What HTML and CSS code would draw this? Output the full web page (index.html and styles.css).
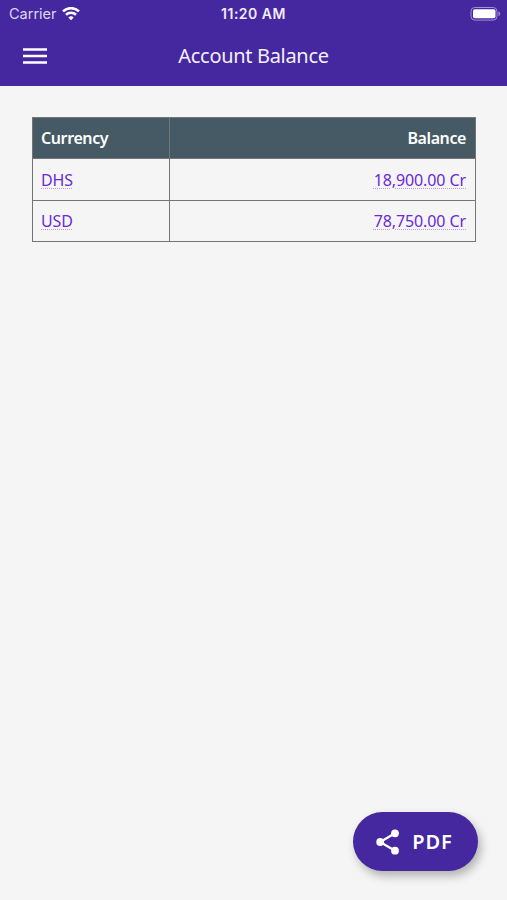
FILE: index.html
```html
<!DOCTYPE html>
<html>
<head>
<meta charset="utf-8">
<title>Account Balance</title>
<link rel="stylesheet" href="styles.css">
</head>
<body>
<div class="header">
  <div class="status">
    <div class="carrier">Carrier
      <svg width="18" height="14" viewBox="0 0 18 14"><path d="M1 4.400a11.500 11.500 0 0 1 16 0M4 7.700a7.300 7.300 0 0 1 10 0" fill="none" stroke="#fff" stroke-width="2.600"/><path d="M9 13.200L6.300 10.500a4 4 0 0 1 5.400 0z" fill="#fff"/></svg>
    </div>
    <div class="time">11:20 AM</div>
    <div class="battery">
      <svg width="31" height="14" viewBox="0 0 31 14"><rect x="1" y=".5" width="26" height="12.600" rx="3.800" fill="none" stroke="#a391d3"/><rect x="3" y="2.300" width="22.500" height="9" rx="1.800" fill="#fff"/><path d="M28.500 4.300v5a2.700 2.700 0 0 0 0-5z" fill="#a391d3"/></svg>
    </div>
  </div>
  <div class="bar">
    <div class="menu">
      <svg width="24" height="16" viewBox="0 0 24 16"><path d="M0 1.500h24M0 8h24M0 14.500h24" stroke="#fff" stroke-width="2.700"/></svg>
    </div>
    <div class="title">Account Balance</div>
    <div class="menu"></div>
  </div>
</div>
<table class="balances">
  <tr><th class="cur">Currency</th><th class="bal">Balance</th></tr>
  <tr class="first"><td class="cur"><a href="#">DHS</a></td><td class="bal"><a href="#">18,900.00 Cr</a></td></tr>
  <tr><td class="cur"><a href="#">USD</a></td><td class="bal"><a href="#">78,750.00 Cr</a></td></tr>
</table>
<div class="pdf">
  <svg width="24" height="26" viewBox="0 0 24 26"><path d="M19 4.300L4.200 13L19 21.700" fill="none" stroke="#fff" stroke-width="2.300"/><circle cx="19" cy="4.300" r="3.900" fill="#fff"/><circle cx="4.200" cy="13" r="3.900" fill="#fff"/><circle cx="19" cy="21.700" r="3.900" fill="#fff"/></svg>
  <span>PDF</span>
</div>
</body>
</html>
```
FILE: styles.css
```css
body{margin:0; height:900px; background:#f5f5f5; font-family:"Noto Sans", sans-serif; display:flex; flex-direction:column; overflow:hidden;}

.header{height:86px; background:#4527a0; color:#fff; box-sizing:border-box;}

.status{height:27px; display:grid; grid-template-columns:1fr 1fr 1fr; align-items:center; font-family:Inter, sans-serif; font-size:14px;}

.carrier{display:flex; align-items:center; gap:5px; padding-left:9px; color:#dcd6ee; font-size:14.5px;}

.time{text-align:center; font-weight:600; letter-spacing:.5px; color:#f0ecfa;}

.battery{display:flex; justify-content:flex-end; padding-right:6px;}

.bar{height:58px; display:flex; align-items:center; justify-content:space-between;}

.menu{width:70px; display:flex; justify-content:center;}

.title{font-size:20px; letter-spacing:-.32px; color:#f3f0fb; padding-bottom:1px;}

.balances{margin:31px 31px 0 32px; width:444px; border-collapse:collapse; table-layout:fixed; font-size:16px; letter-spacing:-.1px;}

th, td{border:1px solid #757575; height:40px; padding:0 9px; text-align:left; font-weight:400; line-height:22px;}

th{background:#455a64; color:#fff; font-weight:600; letter-spacing:-.4px;}

.first td{padding-top:1px;}

.cur{width:119px; padding:0 9px 0 8px;}

.bal{text-align:right;}

a{color:#6a2bd5; text-decoration:underline dotted 1px #b89be8; text-underline-offset:2px;}

.pdf{margin:auto 29px 29px auto; width:125px; height:59px; border-radius:30px; background:#4527a0; color:#fff; display:flex; align-items:center; justify-content:center; gap:12px; font-size:20px; font-weight:600; letter-spacing:1px; box-shadow:3px 5px 10px rgba(0,0,0,.28);}

.pdf svg{margin-left:-2px;}
```
